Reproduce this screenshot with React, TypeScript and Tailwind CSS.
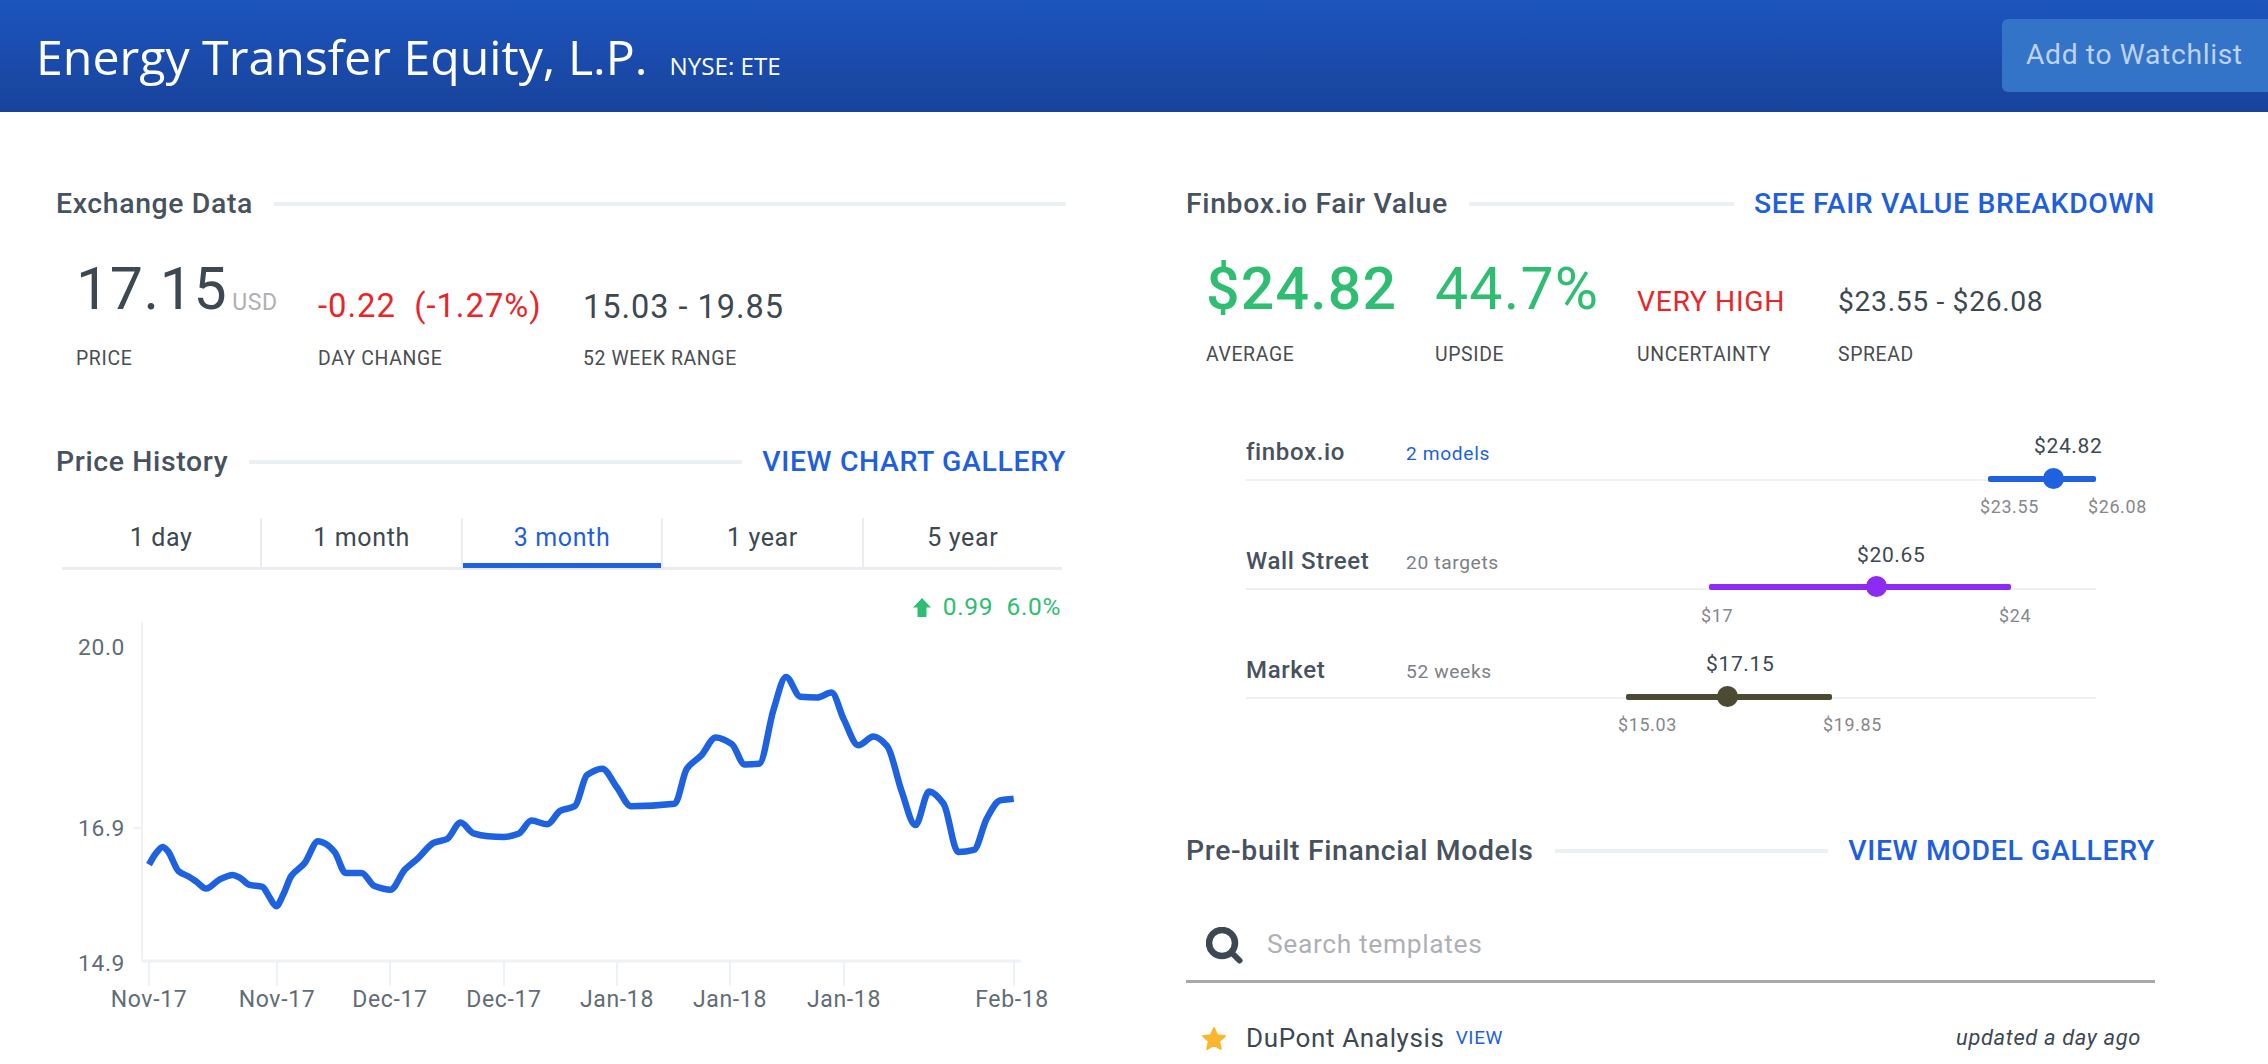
import React from 'react'

const roboto = { fontFamily: 'Roboto, sans-serif' }

const rawLine: [number, number][] = [
  [206, 1078], [215, 1052], [225, 1035], [232, 1045], [247, 1094], [262, 1108], [272, 1120], [285, 1136], [303, 1115],
  [322, 1103], [332, 1110], [345, 1127], [363, 1132], [372, 1155], [382, 1179], [392, 1150], [403, 1105], [421, 1075],
  [440, 1021], [450, 1027], [463, 1048], [478, 1098], [500, 1098], [518, 1130], [540, 1139], [560, 1090], [578, 1063],
  [600, 1025], [618, 1016], [637, 976], [655, 1002], [675, 1009], [697, 1011], [717, 1003], [735, 971], [757, 980],
  [775, 947], [795, 936], [812, 860], [833, 845], [853, 890], [873, 936], [933, 930], [950, 845], [970, 812], [990, 769],
  [1012, 785], [1030, 835], [1050, 833], [1070, 700], [1087, 622], [1107, 670], [1130, 672], [1150, 660], [1167, 725],
  [1187, 788], [1208, 767], [1227, 790], [1247, 900], [1266, 982], [1285, 900], [1305, 930], [1325, 1047], [1347, 1042],
  [1365, 965], [1383, 922], [1402, 918],
]

const chartTop = 620
const line = rawLine.map(([x, y]) => [x / 1.383, 420 + y / 2.43 - chartTop])

// monotone curve, flat at the local peaks like the original chart
const toPath = (pts: number[][]) => {
  const n = pts.length
  const slopes = pts.slice(0, n - 1).map((p, i) => (pts[i + 1][1] - p[1]) / (pts[i + 1][0] - p[0]))
  const tangents = pts.map((_, i) => {
    if (i === 0) return slopes[0]
    if (i === n - 1) return slopes[n - 2]
    const a = slopes[i - 1]
    const b = slopes[i]
    return a * b <= 0 ? 0 : (2 * a * b) / (a + b)
  })
  let d = `M${pts[0][0].toFixed(1)} ${pts[0][1].toFixed(1)}`
  for (let i = 0; i < n - 1; i++) {
    const dx = (pts[i + 1][0] - pts[i][0]) / 3
    const c1y = pts[i][1] + tangents[i] * dx
    const c2y = pts[i + 1][1] - tangents[i + 1] * dx
    d += `C${(pts[i][0] + dx).toFixed(1)} ${c1y.toFixed(1)} ${(pts[i + 1][0] - dx).toFixed(1)} ${c2y.toFixed(1)} ${pts[i + 1][0].toFixed(1)} ${pts[i + 1][1].toFixed(1)}`
  }
  return d
}

const xTicks = [
  { x: 149, label: 'Nov-17' },
  { x: 277, label: 'Nov-17' },
  { x: 390, label: 'Dec-17' },
  { x: 504, label: 'Dec-17' },
  { x: 617, label: 'Jan-18' },
  { x: 730, label: 'Jan-18' },
  { x: 844, label: 'Jan-18' },
  { x: 1014, label: 'Feb-18' },
]

const PriceChart = () => (
  <svg width="1066" height="420" className="-ml-[56px] block">
    <line x1="142" y1="1" x2="142" y2="340" stroke="#eef2f5" strokeWidth="2" />
    <line x1="142" y1="340" x2="1021" y2="340" stroke="#eef2f5" strokeWidth="3" />
    <line x1="133" y1="207" x2="142" y2="207" stroke="#eef2f5" strokeWidth="2" />
    {xTicks.map((t, i) => (
      <line key={i} x1={t.x} y1="341" x2={t.x} y2="365" stroke="#eef2f5" strokeWidth="2" />
    ))}
    {xTicks.map((t, i) => (
      <text key={i} x={i === 7 ? 1012 : t.x} y="386" textAnchor="middle" fontSize="23" fill="#626c76">
        {t.label}
      </text>
    ))}
    <text x="125" y="34" textAnchor="end" fontSize="22.8" fill="#626c76">20.0</text>
    <text x="125" y="215" textAnchor="end" fontSize="22.8" fill="#626c76">16.9</text>
    <text x="125" y="350" textAnchor="end" fontSize="22.8" fill="#626c76">14.9</text>
    <path d={toPath(line)} fill="none" stroke="#1f62e0" strokeWidth="6.5" strokeLinejoin="round" strokeLinecap="butt" />
  </svg>
)

const SectionTitle = ({ title, link }: { title: string; link?: string }) => (
  <div className="flex h-10 items-center">
    <h2 className="text-[28.4px] font-medium whitespace-nowrap text-[#47525e]">{title}</h2>
    <div className="ml-[21px] h-1 flex-1 bg-[#ebf0f3]" />
    {link && <a className="ml-5 text-[28.4px] font-medium whitespace-nowrap text-[#1f5fdd]">{link}</a>}
  </div>
)

const StatLabel = ({ children, className }: { children: string; className: string }) => (
  <div className={`text-[19.4px] leading-[30px] text-[#4a4d50] ${className}`}>{children}</div>
)

const tabs = ['1 day', '1 month', '3 month', '1 year', '5 year']

const ranges = [
  {
    name: 'finbox.io',
    note: '2 models',
    noteClass: 'text-[#1f5fdd]',
    value: '$24.82',
    color: 'bg-[#1f62e0]',
    fill: 'top-[41px] left-[742px] w-[108px]',
    thumb: 'top-[33px] left-[797px]',
    valueX: 'left-[788px]',
    low: '$23.55',
    lowX: 'left-[734px]',
    high: '$26.08',
    highX: 'left-[842px]',
  },
  {
    name: 'Wall Street',
    note: '20 targets',
    noteClass: 'text-[#7b8085]',
    value: '$20.65',
    color: 'bg-[#8e2bf2]',
    fill: 'top-[40px] left-[463px] w-[302px]',
    thumb: 'top-[32px] left-[620px]',
    valueX: 'left-[611px]',
    low: '$17',
    lowX: 'left-[455px]',
    high: '$24',
    highX: 'left-[753px]',
  },
  {
    name: 'Market',
    note: '52 weeks',
    noteClass: 'text-[#7b8085]',
    value: '$17.15',
    color: 'bg-[#4b4a33]',
    fill: 'top-[41px] left-[380px] w-[206px]',
    thumb: 'top-[33px] left-[471px]',
    valueX: 'left-[460px]',
    low: '$15.03',
    lowX: 'left-[372px]',
    high: '$19.85',
    highX: 'left-[577px]',
  },
]

const App = () => {
  return (
    <div className="h-[1064px] w-full overflow-hidden bg-white tracking-[0.04em]" style={roboto}>
      <header className="flex h-[112px] items-center justify-between bg-gradient-to-b from-[#1c55be] to-[#18439b] pl-[36px]">
        <div className="flex items-baseline tracking-normal text-white" style={{ fontFamily: '"Open Sans", sans-serif' }}>
          <h1 className="text-[48.25px] leading-none">Energy Transfer Equity, L.P.</h1>
          <span className="ml-[22px] text-[24.2px] leading-none">NYSE: ETE</span>
        </div>
        <button className="mb-[1px] h-[73px] w-[266px] rounded-l-md bg-[#3474c8] pl-[24px] text-left text-[28.25px] text-[#bcd2ee]">
          Add to Watchlist
        </button>
      </header>

      <main className="flex pt-[72px]">
        <section className="ml-[56px] w-[1010px]">
          <SectionTitle title="Exchange Data" />
          <div className="mt-[19px] flex pl-[20px]">
            <div className="w-[242px]">
              <div className="flex h-[92px] items-end">
                <span className="text-[59px] leading-[92px] tracking-[0.01em] text-[#3d4852]">17.15</span>
                <span className="mb-[21px] ml-[5px] text-[23px] leading-none text-[#aeb0b5]">USD</span>
              </div>
              <StatLabel className="mt-[9px]">PRICE</StatLabel>
            </div>
            <div className="w-[265px]">
              <div className="flex h-[92px] items-end pb-[12px] text-[32.8px] leading-none tracking-[0.03em] whitespace-pre text-[#e8262a]">
                -0.22  (-1.27%)
              </div>
              <StatLabel className="mt-[9px]">DAY CHANGE</StatLabel>
            </div>
            <div>
              <div className="flex h-[92px] items-end pb-[12px] text-[32.5px] leading-none tracking-[0.03em] text-[#3d4852]">
                15.03 - 19.85
              </div>
              <StatLabel className="mt-[9px]">52 WEEK RANGE</StatLabel>
            </div>
          </div>

          <div className="mt-[68px]">
            <SectionTitle title="Price History" link="VIEW CHART GALLERY" />
          </div>

          <div className="mt-[36px] mr-[4px] ml-[6px] flex h-[52px] border-b-[3px] border-[#eaecef] text-[25px]">
            {tabs.map((tab, i) => (
              <div
                key={tab}
                className={`relative flex flex-1 items-start justify-center leading-[40px] ${i < 4 ? 'border-r-2 border-[#eaecef]' : ''} ${
                  i === 2 ? 'text-[#1f5fdd]' : 'text-[#3d4852]'
                }`}
              >
                {tab}
                {i === 2 && <div className="absolute right-0 bottom-[-1px] left-0 h-[5px] bg-[#1f62e0]" />}
              </div>
            ))}
          </div>

          <div className="mt-[23px] mr-[5px] flex h-[28px] items-center justify-end gap-[12px] text-[24.5px] text-[#2fbd72]">
            <svg width="18" height="19" viewBox="0 0 18 19">
              <path d="M9 0 L18 9.5 H13.5 V19 H4.5 V9.5 H0 Z" fill="#2fbd72" />
            </svg>
            <span className="whitespace-pre">0.99  6.0%</span>
          </div>

          <PriceChart />
        </section>

        <section className="ml-[120px] w-[969px]">
          <SectionTitle title="Finbox.io Fair Value" link="SEE FAIR VALUE BREAKDOWN" />
          <div className="mt-[19px] flex pl-[20px]">
            <div className="w-[229px]">
              <div className="flex h-[92px] items-end text-[59px] leading-[92px] font-medium tracking-[0.02em] text-[#2fbd72]">$24.82</div>
              <StatLabel className="mt-[5px]">AVERAGE</StatLabel>
            </div>
            <div className="w-[202px]">
              <div className="flex h-[92px] items-end text-[59px] leading-[92px] tracking-[0.02em] text-[#2fbd72]">44.7%</div>
              <StatLabel className="mt-[5px]">UPSIDE</StatLabel>
            </div>
            <div className="w-[201px]">
              <div className="flex h-[92px] items-end pb-[19px] text-[28.3px] leading-none text-[#e8262a]">VERY HIGH</div>
              <StatLabel className="mt-[5px]">UNCERTAINTY</StatLabel>
            </div>
            <div>
              <div className="flex h-[92px] items-end pb-[19px] text-[28.3px] leading-none text-[#3d4852]">$23.55 - $26.08</div>
              <StatLabel className="mt-[5px]">SPREAD</StatLabel>
            </div>
          </div>

          <div className="mt-[65px] ml-[60px] w-[850px]">
            {ranges.map((r) => (
              <div key={r.name} className="relative h-[109px]">
                <div className="flex h-[44px] items-baseline leading-[34px]">
                  <span className="w-[160px] text-[24px] font-medium text-[#47525e]">{r.name}</span>
                  <span className={`text-[19.2px] ${r.noteClass}`}>{r.note}</span>
                </div>
                <div className="h-[2px] bg-[#ebf0f3]" />
                <span className={`absolute top-[-4px] text-[21px] text-[#3d4852] ${r.valueX}`}>{r.value}</span>
                <div className={`absolute h-[6px] rounded-[2px] ${r.color} ${r.fill}`} />
                <div className={`absolute h-[21px] w-[21px] rounded-full ${r.color} ${r.thumb}`} />
                <span className={`absolute top-[59px] text-[17.9px] text-[#85888c] ${r.lowX}`}>{r.low}</span>
                <span className={`absolute top-[59px] text-[17.9px] text-[#85888c] ${r.highX}`}>{r.high}</span>
              </div>
            ))}
          </div>

          <div className="mt-[69px]">
            <SectionTitle title="Pre-built Financial Models" link="VIEW MODEL GALLERY" />
          </div>

          <div className="mt-[34px] flex h-[78px] items-center border-b-[3px] border-[#a8a9ae] pt-[5px] pl-[20px]">
            <svg width="37" height="37" viewBox="0 0 37 37" fill="none" stroke="#3d4852">
              <circle cx="16" cy="16" r="13" strokeWidth="6.5" />
              <path d="M26 26 L33.5 33.5" strokeLinecap="round" strokeWidth="6" />
            </svg>
            <span className="ml-[24px] text-[26.4px] text-[#aeb0b5]">Search templates</span>
          </div>

          <div className="mt-[36px] flex items-center pl-[15px]">
            <svg width="26" height="25" viewBox="0 0 25 24" fill="#fbb62f" stroke="#fbb62f" strokeWidth="2" strokeLinejoin="round">
              <path d="M12.5 2 L15.5 8.8 L23 9.6 L17.4 14.5 L19 22 L12.5 18.2 L6 22 L7.6 14.5 L2 9.6 L9.5 8.8 Z" />
            </svg>
            <span className="ml-[19px] text-[26px] text-[#3d4852]">DuPont Analysis</span>
            <span className="ml-[11px] text-[19px] text-[#1f5fdd]">VIEW</span>
            <span className="mr-[14px] ml-auto text-[21.9px] italic text-[#3d4852]">updated a day ago</span>
          </div>
        </section>
      </main>
    </div>
  )
}

export default App
